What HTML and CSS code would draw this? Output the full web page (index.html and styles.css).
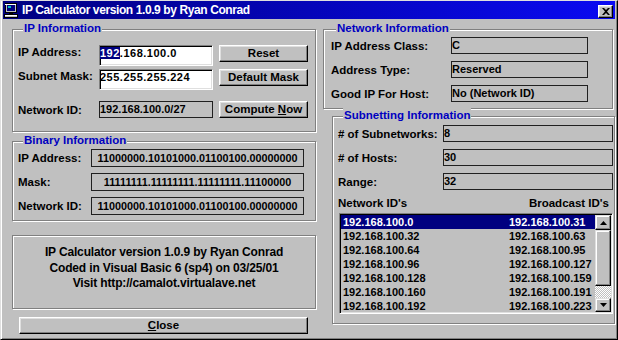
FILE: index.html
```html
<!DOCTYPE html>
<html>
<head>
<meta charset="utf-8">
<link rel="stylesheet" href="styles.css">
</head>
<body>
<div class="window">
  <div class="titlebar">
    <svg class="app-icon" viewBox="0 0 15 15" width="15" height="15">
      <rect x="1.5" y="0.5" width="11" height="9" fill="#c0c0c0" stroke="#000"/>
      <rect x="1" y="1" width="11" height="1" fill="#fff"/>
      <rect x="3" y="2" width="8" height="6" fill="#000080"/>
      <rect x="4" y="3" width="3" height="2" fill="#00c0c0"/>
      <rect x="5" y="10" width="4" height="2" fill="#000"/>
      <rect x="0.5" y="11.5" width="13" height="3" fill="#c0c0c0" stroke="#000"/>
      <rect x="1" y="12" width="12" height="1" fill="#fff"/>
    </svg>
    <span class="title">IP Calculator version 1.0.9 by Ryan Conrad</span>
    <div class="close-x">
      <svg viewBox="0 0 8 7" width="8" height="7"><path d="M0 0H2L4 2L6 0H8L5 3.5L8 7H6L4 5L2 7H0L3 3.5Z" fill="#000"/></svg>
    </div>
  </div>
  <div class="client">
    <div class="col-left">
      <div class="group group-ip">
        <div class="legend">IP Information</div>
        <div class="ip-row r1">
          <span class="lbl">IP Address:</span>
          <div class="textbox"><span class="hl">192</span>.168.100.0</div>
          <div class="btn btn-side">Reset</div>
        </div>
        <div class="ip-row r2">
          <span class="lbl">Subnet Mask:</span>
          <div class="textbox">255.255.255.224</div>
          <div class="btn btn-side">Default Mask</div>
        </div>
        <div class="ip-row r3">
          <span class="lbl">Network ID:</span>
          <div class="vbox vbox-ip">192.168.100.0/27</div>
          <div class="btn btn-side">Compute <u>N</u>ow</div>
        </div>
      </div>
      <div class="group group-bin">
        <div class="legend">Binary Information</div>
        <div class="bin-row b1">
          <span class="lbl">IP Address:</span>
          <div class="bbox">11000000.10101000.01100100.00000000</div>
        </div>
        <div class="bin-row">
          <span class="lbl">Mask:</span>
          <div class="bbox">11111111.11111111.11111111.11100000</div>
        </div>
        <div class="bin-row">
          <span class="lbl">Network ID:</span>
          <div class="bbox">11000000.10101000.01100100.00000000</div>
        </div>
      </div>
      <div class="infobox">
        <div>IP Calculator version 1.0.9 by Ryan Conrad</div>
        <div>Coded in Visual Basic 6 (sp4) on 03/25/01</div>
        <div>Visit http://camalot.virtualave.net</div>
      </div>
      <div class="btn btn-close"><u>C</u>lose</div>
    </div>
    <div class="col-right">
      <div class="group group-net">
        <div class="legend">Network Information</div>
        <div class="net-row n1">
          <span class="lbl">IP Address Class:</span>
          <div class="vbox vbox-net">C</div>
        </div>
        <div class="net-row">
          <span class="lbl">Address Type:</span>
          <div class="vbox vbox-net">Reserved</div>
        </div>
        <div class="net-row">
          <span class="lbl">Good IP For Host:</span>
          <div class="vbox vbox-net">No (Network ID)</div>
        </div>
      </div>
      <div class="group group-sub">
        <div class="legend">Subnetting Information</div>
        <div class="sub-row s1">
          <span class="lbl">#&nbsp;of Subnetworks:</span>
          <div class="vbox vbox-sub">8</div>
        </div>
        <div class="sub-row">
          <span class="lbl"># of Hosts:</span>
          <div class="vbox vbox-sub">30</div>
        </div>
        <div class="sub-row">
          <span class="lbl">Range:</span>
          <div class="vbox vbox-sub">32</div>
        </div>
        <div class="list-head">
          <span>Network ID's</span>
          <span>Broadcast ID's</span>
        </div>
        <div class="listbox">
          <div class="rows">
            <div class="lrow selected"><span class="c1">192.168.100.0</span><span>192.168.100.31</span></div>
            <div class="lrow"><span class="c1">192.168.100.32</span><span>192.168.100.63</span></div>
            <div class="lrow"><span class="c1">192.168.100.64</span><span>192.168.100.95</span></div>
            <div class="lrow"><span class="c1">192.168.100.96</span><span>192.168.100.127</span></div>
            <div class="lrow"><span class="c1">192.168.100.128</span><span>192.168.100.159</span></div>
            <div class="lrow"><span class="c1">192.168.100.160</span><span>192.168.100.191</span></div>
            <div class="lrow"><span class="c1">192.168.100.192</span><span>192.168.100.223</span></div>
          </div>
          <div class="vscroll">
            <div class="sbtn sb-up"><svg viewBox="0 0 7 4" width="7" height="4"><path d="M3.5 0L7 4H0Z" fill="#000"/></svg></div>
            <div class="thumb"></div>
            <div class="track"></div>
            <div class="sbtn sb-down"><svg viewBox="0 0 7 4" width="7" height="4"><path d="M0 0H7L3.5 4Z" fill="#000"/></svg></div>
          </div>
        </div>
      </div>
    </div>
  </div>
</div>
</body>
</html>
```
FILE: styles.css
```css
html, body {
  margin: 0;
  padding: 0;
  background: #c0c0c0;
}

.window {
  width: 618px;
  height: 340px;
  box-sizing: border-box;
  background: #c0c0c0;
  border: 1px solid;
  border-color: #dfdfdf #000 #000 #dfdfdf;
  padding: 0 2px 2px 2px;
  box-shadow: inset 1px 0 #fff, inset -1px -1px #808080;
  font-family: "Liberation Sans", Arial, sans-serif;
  font-weight: bold;
  font-size: 11.5px;
  color: #000;
  overflow: hidden;
}

.titlebar {
  height: 18px;
  display: flex;
  align-items: center;
  background: linear-gradient(90deg, #000080, #0a0af2);
  color: #fff;
}

.app-icon {
  flex: none;
  margin-left: 1px;
}

.title {
  margin-left: 3px;
  font-size: 12px;
  letter-spacing: -0.4px;
  white-space: nowrap;
}

.close-x {
  margin-left: auto;
  margin-right: 2px;
  margin-top: 2px;
  width: 15px;
  height: 13px;
  box-sizing: border-box;
  background: #c0c0c0;
  border: 1px solid;
  border-color: #fff #000 #000 #fff;
  box-shadow: inset -1px -1px #808080, inset 1px 1px #dfdfdf;
  display: flex;
  align-items: center;
  justify-content: center;
}

.client {
  display: flex;
}

.col-left {
  flex: none;
  width: 304px;
  padding-left: 9px;
  display: flex;
  flex-direction: column;
}

.col-right {
  flex: none;
  width: 292px;
  margin-left: 7px;
  display: flex;
  flex-direction: column;
}

.group {
  box-sizing: border-box;
  border: 1px solid #808080;
  box-shadow: inset 1px 1px #fff, 1px 1px #fff;
}

.legend {
  width: max-content;
  margin: -9px 0 0 5px;
  padding: 0 1px;
  background: #c0c0c0;
  color: #0000c0;
  line-height: 14px;
  white-space: nowrap;
}

.lbl {
  flex: none;
  line-height: 14px;
  white-space: nowrap;
}

/* IP Information */
.group-ip {
  margin-top: 10px;
  height: 103px;
  padding-left: 5px;
}

.ip-row {
  display: flex;
  align-items: flex-start;
}

.ip-row .lbl {
  width: 81px;
}

.r1 { margin-top: 10px; }
.r2 { margin-top: 3px; }
.r3 { margin-top: 11px; align-items: center; }

.textbox {
  flex: none;
  width: 114px;
  height: 21px;
  box-sizing: border-box;
  background: #fff;
  border: 1px solid;
  border-color: #808080 #fff #fff #808080;
  box-shadow: inset 1px 1px #000, inset -1px -1px #dfdfdf;
  font-size: 11px;
  letter-spacing: 0.5px;
  line-height: 13px;
  padding-top: 1px;
  white-space: nowrap;
}

.hl {
  background: #000080;
  color: #fff;
}

.vbox {
  flex: none;
  box-sizing: border-box;
  height: 17px;
  border: 1px solid #202020;
  font-size: 11px;
  line-height: 15px;
  padding-left: 0;
  white-space: nowrap;
}

.vbox-ip {
  width: 114px;
}

.btn {
  box-sizing: border-box;
  height: 17px;
  background: #c0c0c0;
  border: 1px solid;
  border-color: #fff #000 #000 #fff;
  box-shadow: inset -1px -1px #808080, inset 1px 1px #dfdfdf;
  text-align: center;
  line-height: 15px;
  white-space: nowrap;
}

.btn-side {
  flex: none;
  width: 89px;
  margin-left: 6px;
}

/* Binary */
.group-bin {
  margin-top: 9px;
  height: 80px;
  padding-left: 5px;
}

.bin-row {
  display: flex;
  align-items: center;
  height: 18px;
  margin-top: 6px;
}

.bin-row.b1 {
  margin-top: 2px;
}

.bin-row .lbl {
  width: 73px;
}

.bbox {
  flex: none;
  width: 213px;
  height: 18px;
  box-sizing: border-box;
  border: 1px solid #202020;
  text-align: center;
  font-size: 10.8px;
  line-height: 16px;
  white-space: nowrap;
}

/* Info box */
.infobox {
  margin-top: 14px;
  height: 74px;
  box-sizing: border-box;
  border: 1px solid #808080;
  box-shadow: inset 1px 1px #fff, 1px 1px #fff;
  text-align: center;
  font-size: 12px;
  letter-spacing: -0.15px;
  line-height: 15.5px;
  padding-top: 9px;
}

.btn-close {
  margin: 8px 0 0 7px;
  width: 289px;
}

/* Network Information */
.group-net {
  margin-top: 10px;
  width: 290px;
  height: 80px;
  padding-left: 7px;
}

.net-row {
  display: flex;
  align-items: center;
  height: 17px;
  margin-top: 7px;
}

.net-row.n1 {
  margin-top: 2px;
}

.net-row .lbl {
  width: 120px;
}

.vbox-net {
  width: 137px;
}

/* Subnetting */
.group-sub {
  margin: 7px 0 0 9px;
  width: 283px;
  height: 208px;
  padding-left: 5px;
}

.sub-row {
  display: flex;
  align-items: center;
  height: 17px;
  margin-top: 7px;
}

.sub-row.s1 {
  margin-top: 3px;
}

.sub-row .lbl {
  width: 105px;
}

.vbox-sub {
  width: 170px;
}

.list-head {
  display: flex;
  justify-content: space-between;
  margin-top: 7px;
  padding-right: 5px;
  line-height: 13px;
}

.listbox {
  margin: 3px 0 0 1px;
  width: 274px;
  height: 101px;
  box-sizing: border-box;
  border: 1px solid;
  border-color: #808080 #fff #fff #808080;
  box-shadow: inset 1px 1px #000, inset -1px -1px #dfdfdf;
  padding: 1px;
  display: flex;
}

.rows {
  flex: 1;
  overflow: hidden;
}

.lrow {
  display: flex;
  height: 14px;
  font-size: 11px;
  line-height: 14px;
  white-space: nowrap;
}

.lrow .c1 {
  width: 166px;
  padding-left: 2px;
}

.lrow.selected {
  background: #000080;
  color: #fff;
}

.vscroll {
  flex: none;
  width: 16px;
  display: flex;
  flex-direction: column;
}

.sbtn, .thumb {
  box-sizing: border-box;
  background: #c0c0c0;
  border: 1px solid;
  border-color: #dfdfdf #000 #000 #dfdfdf;
  box-shadow: inset -1px -1px #808080, inset 1px 1px #fff;
}

.sbtn {
  display: flex;
  align-items: center;
  justify-content: center;
}

.sb-up { height: 15px; }
.thumb { height: 56px; }
.track {
  flex: 1;
  background: repeating-conic-gradient(#fff 0 25%, #c0c0c0 0 50%) 0 0 / 2px 2px;
}
.sb-down { height: 14px; }
```
